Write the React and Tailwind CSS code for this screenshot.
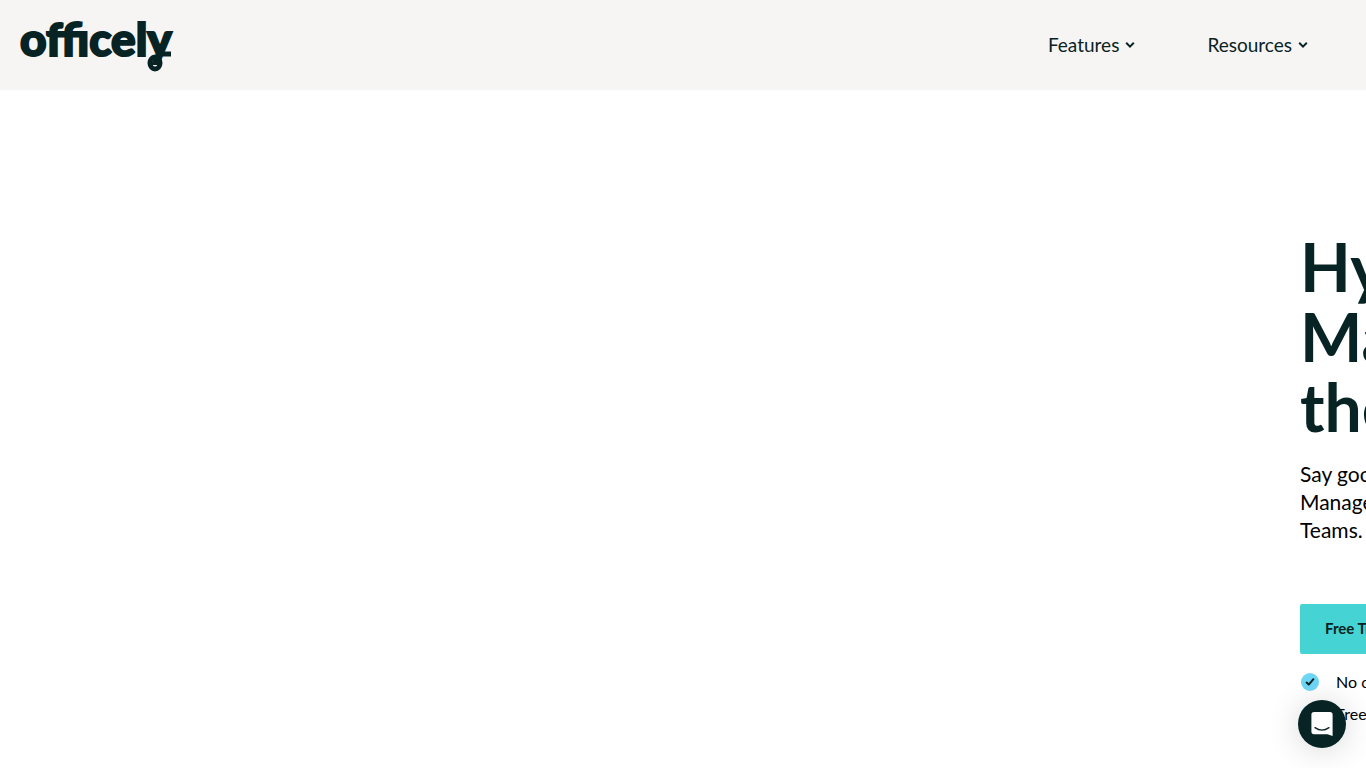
import React from 'react';

const navItems = ['Features', 'Resources'];
const headline = ['Hybrid Work', 'Management for', 'the Modern Team'];
const intro = ['Say goodbye to Office', 'Management. Say hello to', 'Teams.'];
const perks = ['No credit card required', 'Free for small teams'];

// wordmark with the looped tail and crossbar on the last letter
const Logo = () => (
  <a href="#home" aria-label="officely" className="block">
    <svg width="152" height="54" viewBox="0 0 152 54" className="block overflow-visible">
      <text
        x="0"
        y="38"
        fontSize="46"
        fontWeight="900"
        fill="#082324"
        stroke="#082324"
        strokeWidth="2"
        style={{ fontFamily: 'Lato, sans-serif' }}
      >
        officely
      </text>
      <g fill="none" stroke="#082324" strokeWidth="5">
        <ellipse cx="135" cy="45" rx="5" ry="6" />
        <path d="M138 36H151" />
      </g>
    </svg>
  </a>
);

const Chevron = () => (
  <svg width="10" height="8" viewBox="0 0 10 8" fill="none" aria-hidden="true">
    <path d="M1.2 1.8 5 5.6 8.8 1.8" stroke="#082324" strokeWidth="2" />
  </svg>
);

const Tick = () => (
  <svg width="20" height="20" viewBox="0 0 20 20" fill="none" aria-hidden="true" className="shrink-0">
    <circle cx="10" cy="10" r="9" fill="#70d6f5" />
    <path
      d="M6.6 10.6 8.8 12.6 13.4 7.2"
      stroke="#082324"
      strokeWidth="2"
      strokeLinecap="round"
      strokeLinejoin="round"
    />
  </svg>
);

const ChatButton = () => (
  <button
    type="button"
    aria-label="Open chat"
    className="fixed bottom-5 right-5 flex size-12 items-center justify-center rounded-full bg-[#082324] shadow-[0_2px_32px_rgba(0,0,0,0.16)]"
  >
    <svg width="22" height="24" viewBox="0 0 22 24" fill="none" aria-hidden="true">
      <path d="M3 0H19A2.6 2.6 0 0 1 21.6 2.6V24L16.5 22.2H3A2.6 2.6 0 0 1 .4 19.6V2.6A2.6 2.6 0 0 1 3 0Z" fill="#fff" />
      <path d="M4 15.6Q11 20.6 18 15.6" stroke="#082324" strokeWidth="1.3" strokeLinecap="round" />
    </svg>
  </button>
);

const App = () => {
  return (
    <div className="min-h-screen overflow-hidden bg-white font-['Lato',sans-serif] text-[#082324]">
      <header className="flex h-[90px] items-center justify-between bg-[#f7f5f4] pl-5 pr-[58px]">
        <Logo />
        <nav className="flex gap-[72px]">
          {navItems.map((item) => (
            <button key={item} type="button" className="flex items-center gap-[6px] text-[19px] leading-6">
              {item}
              <Chevron />
            </button>
          ))}
        </nav>
      </header>

      <main className="flex justify-end pt-[142px]">
        <section className="w-[66px] whitespace-nowrap">
          <h1 className="text-[66px] font-bold leading-[70px]">
            {headline.map((line) => (
              <span key={line} className="block">{line}</span>
            ))}
          </h1>

          <p className="mt-[18px] text-[21px] leading-7 text-black">
            {intro.map((line) => (
              <span key={line} className="block">{line}</span>
            ))}
          </p>

          <a
            href="#trial"
            className="mt-[60px] flex h-[50px] w-[140px] items-center rounded-xs bg-[#45d3d3] pb-[2px] pl-[25px] text-[15px] font-bold"
          >
            Free Trial
          </a>

          <ul className="mt-3 text-base leading-8 text-black">
            {perks.map((perk) => (
              <li key={perk} className="flex items-center gap-4">
                <Tick />
                {perk}
              </li>
            ))}
          </ul>
        </section>
      </main>

      <ChatButton />
    </div>
  );
};

export default App;
